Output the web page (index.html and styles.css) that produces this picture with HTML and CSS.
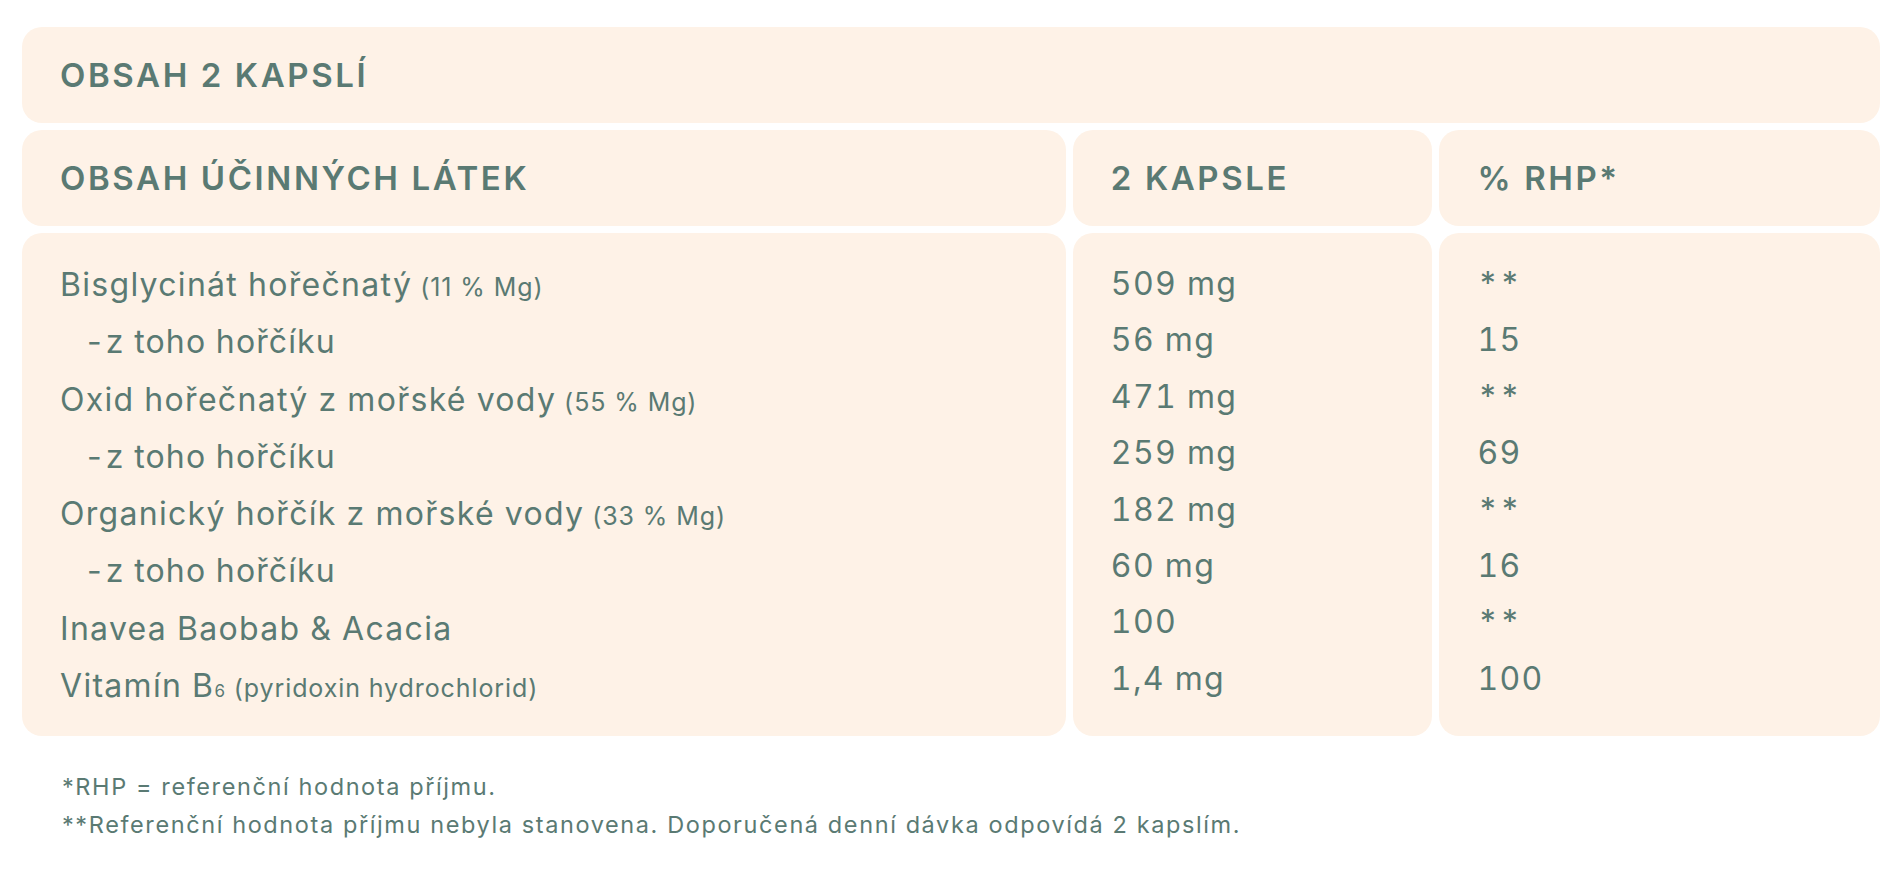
FILE: index.html
```html
<!DOCTYPE html>
<html lang="cs">
<head>
<meta charset="utf-8">
<title>Obsah 2 kapslí</title>
<link rel="stylesheet" href="styles.css">
</head>
<body>
<div class="wrap">
  <div class="title-box"><h2 class="head">OBSAH 2 KAPSLÍ</h2></div>
  <div class="grid">
    <div class="cell hcell"><span class="head">OBSAH ÚČINNÝCH LÁTEK</span></div>
    <div class="cell hcell"><span class="head">2 KAPSLE</span></div>
    <div class="cell hcell"><span class="head">% RHP*</span></div>

    <div class="cell bcell names">
      <div class="line">Bisglycinát hořečnatý<span class="small"> (11 % Mg)</span></div>
      <div class="line sub-row">-z toho hořčíku</div>
      <div class="line">Oxid hořečnatý z mořské vody<span class="small"> (55 % Mg)</span></div>
      <div class="line sub-row">-z toho hořčíku</div>
      <div class="line">Organický hořčík z mořské vody<span class="small"> (33 % Mg)</span></div>
      <div class="line sub-row">-z toho hořčíku</div>
      <div class="line">Inavea Baobab &amp; Acacia</div>
      <div class="line">Vitamín B<span class="subs">6</span><span class="small"> (pyridoxin hydrochlorid)</span></div>
    </div>
    <div class="cell bcell vals">
      <div class="line">509 mg</div>
      <div class="line">56 mg</div>
      <div class="line">471 mg</div>
      <div class="line">259 mg</div>
      <div class="line">182 mg</div>
      <div class="line">60 mg</div>
      <div class="line">100</div>
      <div class="line">1,4 mg</div>
    </div>
    <div class="cell bcell vals">
      <div class="line">**</div>
      <div class="line">15</div>
      <div class="line">**</div>
      <div class="line">69</div>
      <div class="line">**</div>
      <div class="line">16</div>
      <div class="line">**</div>
      <div class="line">100</div>
    </div>
  </div>
  <div class="notes">
    <p>*RHP = referenční hodnota příjmu.</p>
    <p>**Referenční hodnota příjmu nebyla stanovena. Doporučená denní dávka odpovídá 2 kapslím.</p>
  </div>
</div>
</body>
</html>
```

FILE: styles.css
```css
html, body {
  margin: 0;
  padding: 0;
  background: #ffffff;
}
body {
  font-family: Inter, "Noto Sans", "Liberation Sans", sans-serif;
  color: #5a7a73;
}
.wrap {
  padding: 27px 23px 0 22px;
}
.title-box {
  background: #fef2e7;
  border-radius: 20px;
  height: 96px;
  display: flex;
  align-items: center;
  padding-left: 38px;
  margin-bottom: 7px;
}
.head {
  margin: 0;
  font-size: 33px;
  font-weight: 600;
  letter-spacing: 2.6px;
  line-height: 1;
}
.grid {
  display: grid;
  grid-template-columns: 1045fr 360fr 441fr;
  column-gap: 7px;
  row-gap: 7px;
}
.cell {
  background: #fef2e7;
  border-radius: 20px;
  padding-left: 38px;
}
.hcell {
  height: 96px;
  display: flex;
  align-items: center;
}
.bcell {
  padding-top: 23px;
  padding-bottom: 22px;
  font-size: 32px;
  letter-spacing: 1.3px;
  font-variant-numeric: tabular-nums;
}
.names .line {
  line-height: 57.3px;
  height: 57.3px;
  white-space: nowrap;
}
.vals .line {
  line-height: 56.4px;
  height: 56.4px;
}
.sub-row {
  padding-left: 24px;
  letter-spacing: 1.1px;
}
.small {
  font-size: 25px;
  letter-spacing: 0.9px;
  font-variant-numeric: normal;
}
.subs {
  font-size: 17px;
  letter-spacing: 0.5px;
}
.notes {
  margin-top: 32px;
  padding-left: 40px;
  font-size: 23.5px;
  line-height: 38px;
  letter-spacing: 1.6px;
}
.notes p {
  margin: 0;
}
```
